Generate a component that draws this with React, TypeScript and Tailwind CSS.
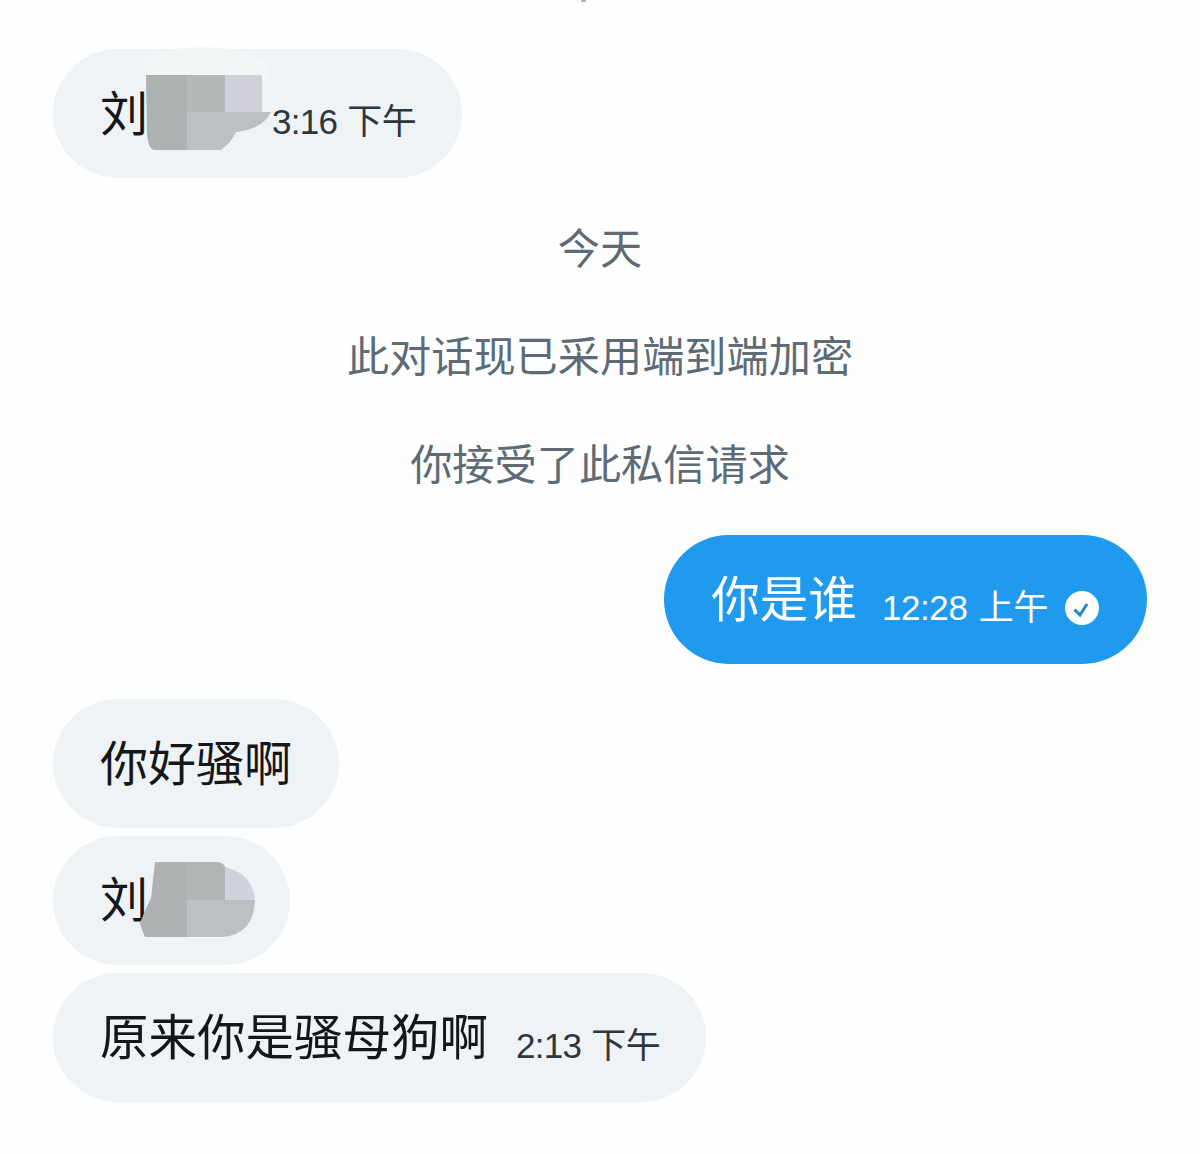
const font = { fontFamily: '"Liberation Sans", "Noto Sans CJK SC", sans-serif' }

function Time({ children, className = '' }: { children: React.ReactNode; className?: string }) {
  return <span className={`text-[35px] whitespace-nowrap ${className}`}>{children}</span>
}

function Notice({ children }: { children: React.ReactNode }) {
  return (
    <div className="h-[108px] pt-[2px] flex items-center justify-center text-[42.2px] text-[#5c6b75]">{children}</div>
  )
}

function Bubble({ children, className = '' }: { children: React.ReactNode; className?: string }) {
  return (
    <div className={`relative h-[129px] w-fit rounded-full bg-[#eff3f5] pl-[47px] flex items-center text-[48px] text-[#14171a] ${className}`}>
      {children}
    </div>
  )
}

// mosaic over the name in the first bubble
function CensorTop() {
  return (
    <svg className="absolute left-[90px] top-[-6px]" width="140" height="112" viewBox="0 0 140 112">
      <ellipse cx="60" cy="28" rx="66" ry="24" fill="#f3f6f7" />
      <path d="M93 72 L100 84" stroke="#14171a" strokeWidth="3" />
      <path d="M3 32 H44 V107 H12 Q5 107 4 90 Z" fill="#adb1b2" />
      <path d="M44 32 H82 V69 H44 Z" fill="#b5b9ba" />
      <path d="M82 32 H119 V69 H82 Z" fill="#cfd0d8" />
      <path d="M44 69 H128 Q120 86 93 89 Q88 100 78 107 H44 Z" fill="#bcc0c3" />
    </svg>
  )
}

// mosaic over the name in the repeated bubble
function CensorBottom() {
  return (
    <svg className="absolute left-[86px] top-[26px]" width="122" height="78" viewBox="0 0 122 78">
      <path d="M16 0 H48 V75 H6 Q2 66 1 61 Q6 48 12 36 Z" fill="#adb1b2" />
      <path d="M48 0 H80 Q85 2 86 5 V38 H48 Z" fill="#b2b6b6" />
      <path d="M86 5 Q114 12 116 38 H86 Z" fill="#d2d2dc" />
      <path d="M48 38 H116 Q115 72 84 75 H48 Z" fill="#bcc0c3" />
    </svg>
  )
}

export default function App() {
  return (
    <div className="relative w-[1200px] h-[1154px] bg-[#fffefe] pt-[49px] overflow-hidden" style={font}>
      <div className="absolute left-[581px] top-0 w-[5px] h-[2px] bg-[#a9adb0] rounded-full" />

      <div className="pl-[53px]">
        <Bubble className="pr-[46px]">
          <span className="mt-[2px]">刘</span>
          <span className="w-[124px] h-[48px] shrink-0" />
          <Time className="mt-[18px] text-[#2c363c] tracking-[-0.7px] [word-spacing:1px]">3:16 下午</Time>
          <CensorTop />
        </Bubble>
      </div>

      <div className="mt-[17px]">
        <Notice>今天</Notice>
        <Notice>此对话现已采用端到端加密</Notice>
        <Notice>你接受了此私信请求</Notice>
      </div>

      <div className="mt-[16px] pr-[53px] flex justify-end">
        <div className="h-[129px] rounded-full bg-[#1f9aee] pl-[47px] pr-[48px] flex items-center text-white">
          <span className="text-[48.5px] mt-[2px]">你是谁</span>
          <Time className="ml-[25px] mt-[18px] tracking-[-0.4px] [word-spacing:2px]">12:28 上午</Time>
          <svg className="ml-[17px] mt-[17px]" width="34" height="34" viewBox="0 0 34 34">
            <circle cx="17" cy="17" r="17" fill="#fff" />
            <path d="M9.5 18.5 L15 24 L22 13" fill="none" stroke="#2a88c8" strokeWidth="3" />
          </svg>
        </div>
      </div>

      <div className="mt-[35px] pl-[53px] flex flex-col gap-[8px]">
        <Bubble className="pr-[47px]">
          <span className="mt-[2px]">你好骚啊</span>
        </Bubble>
        <Bubble className="pr-[47px]">
          <span>刘</span>
          <span className="w-[95px] h-[48px] shrink-0" />
          <CensorBottom />
        </Bubble>
        <Bubble className="pr-[46px]">
          <span className="mt-[2px] text-[48.5px]">原来你是骚母狗啊</span>
          <Time className="ml-[28px] mt-[18px] text-[#2c363c] tracking-[-0.7px] [word-spacing:1px]">2:13 下午</Time>
        </Bubble>
      </div>
    </div>
  )
}
